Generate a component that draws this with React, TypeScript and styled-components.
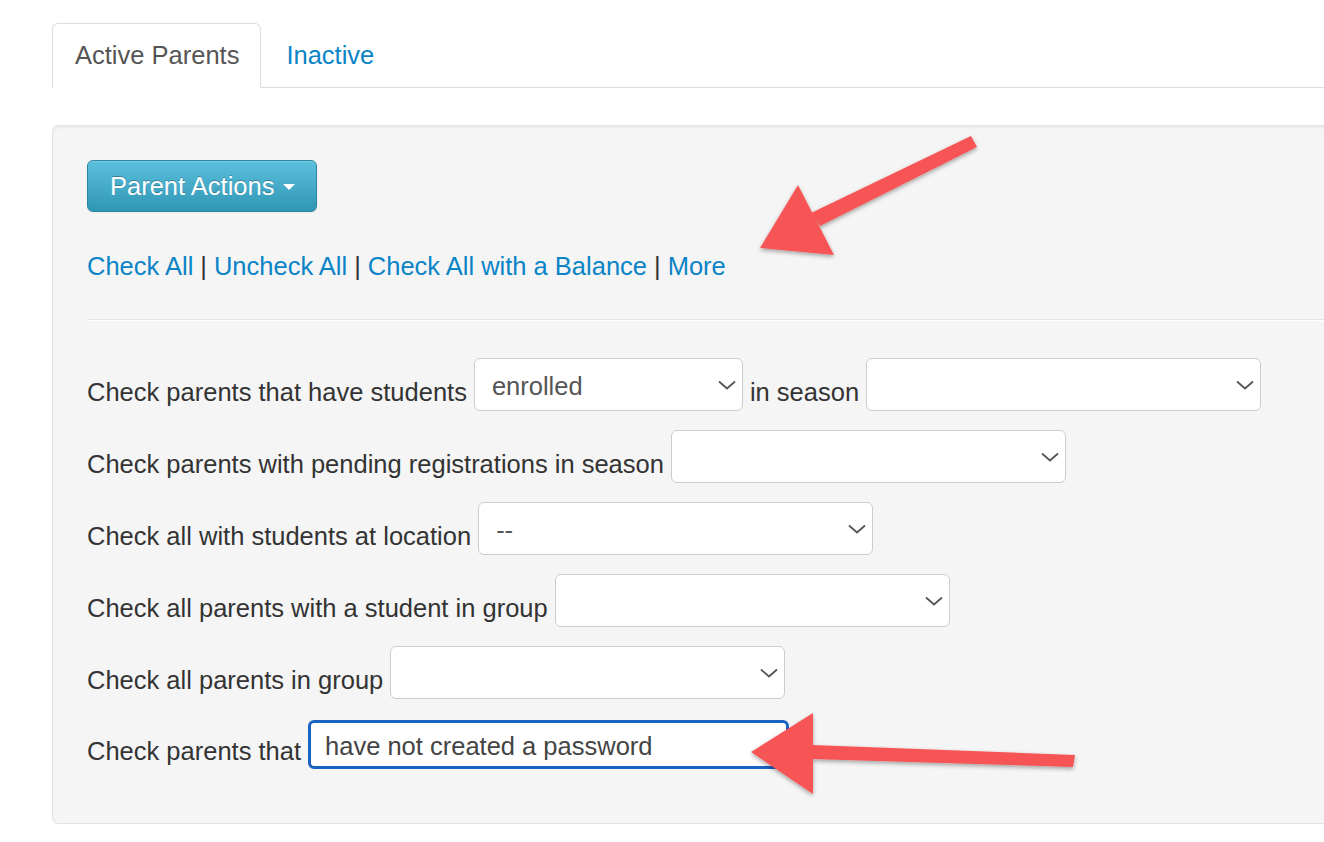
import React from "react";
import styled, { createGlobalStyle } from "styled-components";

const Global = createGlobalStyle`
  html, body { margin: 0; padding: 0; background: #fff; }
  body { font-family: "Liberation Sans", Arial, sans-serif; color: #333; overflow: hidden; }
  * { box-sizing: border-box; }
`;

const Page = styled.div`
  position: relative;
  width: 1324px;
  height: 842px;
  padding: 23px 0 0 52px;
  overflow: hidden;
  font-size: 25.5px;
`;

const TabBar = styled.ul`
  display: flex;
  margin: 0 -40px 37px 0;
  padding: 0;
  list-style: none;
  border-bottom: 1px solid #ddd;
`;

const Tab = styled.li<{ $active?: boolean }>`
  height: 65px;
  margin-bottom: -1px;
  margin-right: 2px;
  display: flex;
  align-items: center;
  border: 1px solid ${(p) => (p.$active ? "#ddd" : "transparent")};
  border-bottom-color: ${(p) => (p.$active ? "#fff" : "transparent")};
  border-radius: 6px 6px 0 0;
  background: ${(p) => (p.$active ? "#fff" : "transparent")};
  color: ${(p) => (p.$active ? "#555" : "#0a84c6")};
  padding: 0 ${(p) => (p.$active ? "21px 0 22px" : "22px")};
`;

const Well = styled.div`
  margin-right: -40px;
  min-height: 699px;
  padding: 34px 35px 35px 34px;
  background: #f5f5f5;
  border: 1px solid #e3e3e3;
  border-radius: 6px;
  box-shadow: inset 0 2px 2px rgba(0, 0, 0, 0.05);
`;

const ActionButton = styled.button`
  display: inline-flex;
  align-items: center;
  gap: 9px;
  height: 52px;
  padding: 0 21px 0 22px;
  font: inherit;
  color: #fff;
  text-shadow: 0 -1px 0 rgba(0, 0, 0, 0.25);
  background: linear-gradient(to bottom, #5bc0de, #2f96b4);
  border: 1px solid #2a87a3;
  border-radius: 6px;
  box-shadow: inset 0 1px 0 rgba(255, 255, 255, 0.2), 0 1px 2px rgba(0, 0, 0, 0.05);
`;

const Caret = styled.span`
  width: 0;
  height: 0;
  border-left: 6px solid transparent;
  border-right: 6px solid transparent;
  border-top: 6px solid #fff;
  margin-top: 2px;
`;

const LinkRow = styled.div`
  margin-top: 39px;
  line-height: 30px;
  display: flex;
  align-items: center;
  gap: 7px;
`;

const Link = styled.a`
  color: #0a84c6;
  text-decoration: none;
`;

const Pipe = styled.span`
  color: #333;
`;

const Rule = styled.hr`
  margin: 38px -40px 37px 0;
  border: 0;
  border-top: 1px solid #e5e5e5;
  border-bottom: 1px solid #fff;
`;

const FormRow = styled.div`
  display: flex;
  align-items: center;
  gap: 7px;
  margin-bottom: 19px;
`;

const Label = styled.span`
  margin-top: 15px;
  white-space: nowrap;
`;

const SelectBox = styled.div<{ $w: number }>`
  width: ${(p) => p.$w}px;
  height: 53px;
  display: flex;
  align-items: center;
  justify-content: space-between;
  padding: 3px 6px 0 17px;
  background: #fff;
  border: 1px solid #ccc;
  border-radius: 6px;
  color: #555;
`;

const Chevron = styled.svg`
  flex: none;
  margin-top: -2px;
`;

const TextInput = styled.div`
  width: 481px;
  height: 49px;
  display: flex;
  align-items: center;
  padding: 3px 0 0 14px;
  margin-top: 2px;
  background: #fff;
  border: 3px solid #1a63c2;
  border-radius: 6px;
  color: #444;
`;

const Overlay = styled.svg`
  position: absolute;
  top: 0;
  left: 0;
  pointer-events: none;
`;

const Select = ({ w, value }: { w: number; value?: string }) => (
  <SelectBox $w={w}>
    <span>{value ?? ""}</span>
    <Chevron width="18" height="10" viewBox="0 0 18 10">
      <path d="M1 1.5 L9 8.5 L17 1.5" fill="none" stroke="#555" strokeWidth="1.8" />
    </Chevron>
  </SelectBox>
);

export default function App() {
  return (
    <>
      <Global />
      <Page>
        <TabBar>
          <Tab $active>Active Parents</Tab>
          <Tab>Inactive</Tab>
        </TabBar>
        <Well>
          <ActionButton>
            Parent Actions <Caret />
          </ActionButton>
          <LinkRow>
            <Link href="#">Check All</Link>
            <Pipe>|</Pipe>
            <Link href="#">Uncheck All</Link>
            <Pipe>|</Pipe>
            <Link href="#">Check All with a Balance</Link>
            <Pipe>|</Pipe>
            <Link href="#">More</Link>
          </LinkRow>
          <Rule />
          <FormRow>
            <Label>Check parents that have students</Label>
            <Select w={269} value="enrolled" />
            <Label>in season</Label>
            <Select w={395} />
          </FormRow>
          <FormRow>
            <Label>Check parents with pending registrations in season</Label>
            <Select w={395} />
          </FormRow>
          <FormRow>
            <Label>Check all with students at location</Label>
            <Select w={395} value="--" />
          </FormRow>
          <FormRow>
            <Label>Check all parents with a student in group</Label>
            <Select w={395} />
          </FormRow>
          <FormRow>
            <Label>Check all parents in group</Label>
            <Select w={395} />
          </FormRow>
          <FormRow>
            <Label>Check parents that</Label>
            <TextInput>have not created a password</TextInput>
          </FormRow>
        </Well>
        <Overlay width="1324" height="842" viewBox="0 0 1324 842">
          <defs>
            <filter id="sh" x="-20%" y="-20%" width="140%" height="140%">
              <feDropShadow dx="0" dy="2" stdDeviation="2" floodColor="#000" floodOpacity="0.35" />
            </filter>
          </defs>
          <g fill="#f75555" stroke="none" filter="url(#sh)">
            <polygon points="977,147 971,136 811,213 820,226" />
            <polygon points="760,248 798,185 834,255" />
            <polygon points="1075,755 1073,767 812,759 812,745" />
            <polygon points="751,752 813,713 813,794" />
          </g>
        </Overlay>
      </Page>
    </>
  );
}
